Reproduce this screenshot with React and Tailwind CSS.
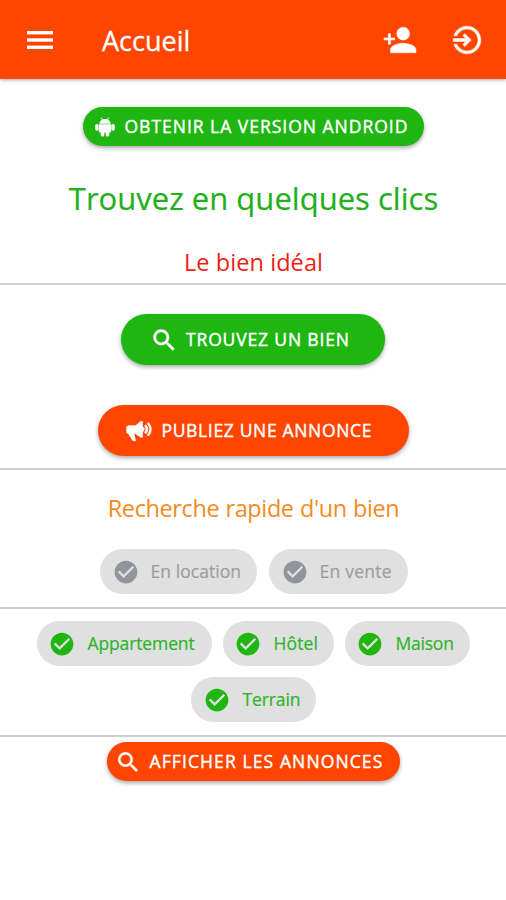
import {
  IoMdPersonAdd,
  IoMdLogIn,
  IoMdSearch,
  IoMdMegaphone,
  IoMdCheckmarkCircle,
} from "react-icons/io";

function MenuIcon({ className }) {
  return (
    <svg viewBox="0 0 26 18" className={className} fill="currentColor" aria-hidden="true">
      <rect x="0" y="0" width="26" height="3.4" />
      <rect x="0" y="7.3" width="26" height="3.4" />
      <rect x="0" y="14.6" width="26" height="3.4" />
    </svg>
  );
}

function AndroidIcon({ className }) {
  return (
    <svg viewBox="0 0 20 20" className={className} fill="currentColor" aria-hidden="true">
      <path d="M6.4 1 7.6 3M13.6 1 12.4 3" stroke="currentColor" strokeWidth="1" strokeLinecap="round" />
      <path d="M4.3 6.8C4.6 3.8 7 1.9 10 1.9s5.4 1.9 5.7 4.9z" />
      <path d="M3.8 7.3h12.4v6.6a1.7 1.7 0 0 1-1.7 1.7h-9a1.7 1.7 0 0 1-1.700-1.700z" />
      <rect x="0.2" y="6.9" width="3.4" height="6.8" rx="1.7" />
      <rect x="16.4" y="6.9" width="3.4" height="6.8" rx="1.7" />
      <rect x="5.7" y="12" width="3.6" height="7.6" rx="1.7" />
      <rect x="10.7" y="12" width="3.6" height="7.6" rx="1.7" />
    </svg>
  );
}

function PillButton({ className, children }) {
  return (
    <button
      className={`flex items-center rounded-full text-[17.5px] font-medium whitespace-nowrap text-white shadow-[0_2px_4px_rgba(0,0,0,0.35)] [-webkit-text-stroke:0.4px] ${className}`}
    >
      {children}
    </button>
  );
}

function Chip({ className, tracking, icon, label }) {
  return (
    <div className={`flex h-[45px] items-center rounded-full bg-[#e0e0e0] whitespace-nowrap ${className}`}>
      <IoMdCheckmarkCircle className={`size-7 shrink-0 ${icon}`} />
      <span className={`-mt-px ml-[11px] text-[17.5px] leading-6 [-webkit-text-stroke:0.2px] ${tracking}`}>{label}</span>
    </div>
  );
}

export default function App() {
  return (
    <div className="flex h-[900px] w-[506px] flex-col overflow-hidden bg-white font-['Trebuchet_MS','Open_Sans',sans-serif]">
      <header className="flex h-[79px] shrink-0 items-center bg-[#ff4500] text-white shadow-[0_1px_4px_rgba(0,0,0,0.35)]">
        <MenuIcon className="ml-[27px] h-[18px] w-[26px]" />
        <h1 className="mt-[2px] ml-[49px] text-[27px] leading-9 font-medium [-webkit-text-stroke:0.3px]">Accueil</h1>
        <IoMdPersonAdd className="mr-[33px] ml-auto size-[34px] stroke-white [stroke-width:8]" />
        <IoMdLogIn className="mr-[22px] size-[34px] stroke-white [stroke-width:8]" />
      </header>

      <section className="flex h-[206px] shrink-0 flex-col items-center border-b-2 border-[#d0d0d0] pt-[28px]">
        <PillButton className="h-[39px] w-[341px] bg-[#1fb611] pl-3">
          <AndroidIcon className="size-5" />
          <span className="ml-[10px] tracking-[0.99px]">OBTENIR LA VERSION ANDROID</span>
        </PillButton>
        <h2 className="mt-[30px] ml-px text-[31px] leading-[44px] tracking-[0.02px] whitespace-nowrap text-[#1fb01c] [-webkit-text-stroke:0.2px]">Trouvez en quelques clics</h2>
        <p className="mt-[26px] ml-px text-[23.5px] leading-8 tracking-[0.08px] whitespace-nowrap text-[#f01d12]">Le bien idéal</p>
      </section>

      <section className="flex h-[185px] shrink-0 flex-col items-center border-b-2 border-[#d0d0d0] pt-[29px]">
        <PillButton className="h-[51px] w-[264px] bg-[#1fb611] pl-[29px]">
          <IoMdSearch className="size-[28px] stroke-white [stroke-width:8]" />
          <span className="ml-[8px] tracking-[0.85px]">TROUVEZ UN BIEN</span>
        </PillButton>
        <PillButton className="mt-10 h-[51px] w-[311px] bg-[#ff4500] pl-[27px]">
          <IoMdMegaphone className="size-[28px] stroke-white [stroke-width:14]" />
          <span className="ml-[9px] tracking-[0.66px]">PUBLIEZ UNE ANNONCE</span>
        </PillButton>
      </section>

      <section className="flex h-[139px] shrink-0 flex-col items-center border-b-2 border-[#d0d0d0] pt-[22px]">
        <h3 className="ml-px text-[23.5px] leading-8 tracking-[-0.39px] whitespace-nowrap text-[#f58b1f] [word-spacing:0.5px]">Recherche rapide d'un bien</h3>
        <div className="mt-[25px] ml-px flex gap-3">
          <Chip className="w-[157px] pl-3 text-[#9a9da0]" icon="text-[#92949c]" tracking="tracking-[0.06px]" label="En location" />
          <Chip className="w-[139px] pl-3 text-[#9a9da0]" icon="text-[#92949c]" tracking="tracking-[0.26px]" label="En vente" />
        </div>
      </section>

      <section className="flex h-[128px] shrink-0 flex-col items-center gap-[11px] border-b-2 border-[#d0d0d0] pt-[12px]">
        <div className="flex gap-[11px]">
          <Chip className="w-[175px] pl-[11px] text-[#2cb52a]" icon="text-[#1fb611]" tracking="tracking-[-0.12px] pl-px" label="Appartement" />
          <Chip className="w-[111px] pl-[11px] text-[#2cb52a]" icon="text-[#1fb611]" tracking="tracking-[0.15px] pl-px" label="Hôtel" />
          <Chip className="w-[125px] pl-[11px] text-[#2cb52a]" icon="text-[#1fb611]" tracking="tracking-[-0.22px] pl-px" label="Maison" />
        </div>
        <Chip className="w-[125px] pl-3 text-[#2cb52a]" icon="text-[#1fb611]" tracking="tracking-[-0.1px] pl-px" label="Terrain" />
      </section>

      <section className="flex flex-col items-center pt-[5px]">
        <PillButton className="h-[39px] w-[293px] bg-[#ff4500] pl-2">
          <IoMdSearch className="size-[26px] stroke-white [stroke-width:8]" />
          <span className="ml-[9px] tracking-[1.11px]">AFFICHER LES ANNONCES</span>
        </PillButton>
      </section>
    </div>
  );
}
